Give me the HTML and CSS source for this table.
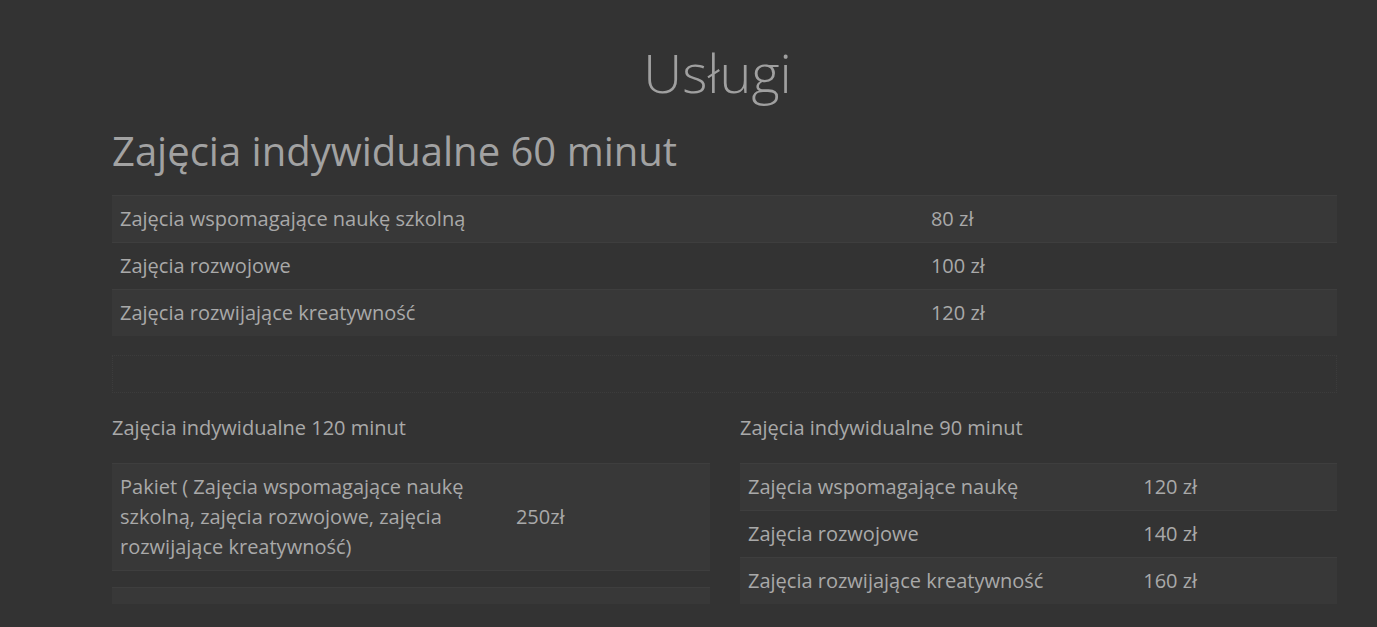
FILE: index.html
```html
<!DOCTYPE html>
<html lang="pl">
<head>
<meta charset="utf-8">
<title>Usługi</title>
<link rel="stylesheet" href="styles.css">
</head>
<body>
<main class="page">
  <h1 class="title">Usługi</h1>
  <h2 class="section-title">Zajęcia indywidualne 60 minut</h2>
  <table class="price-table wide">
    <tr><td class="name">Zajęcia wspomagające naukę szkolną</td><td>80 zł</td></tr>
    <tr><td class="name">Zajęcia rozwojowe</td><td>100 zł</td></tr>
    <tr><td class="name">Zajęcia rozwijające kreatywność</td><td>120 zł</td></tr>
  </table>
  <div class="empty-box"></div>
  <div class="columns">
    <section class="col">
      <h3 class="col-title">Zajęcia indywidualne 120 minut</h3>
      <table class="price-table">
        <tr><td class="name">Pakiet ( Zajęcia wspomagające naukę szkolną, zajęcia rozwojowe, zajęcia rozwijające kreatywność)</td><td>250zł</td></tr>
        <tr class="empty"><td></td><td></td></tr>
        <tr class="empty"><td></td><td></td></tr>
      </table>
    </section>
    <section class="col">
      <h3 class="col-title">Zajęcia indywidualne 90 minut</h3>
      <table class="price-table">
        <tr><td class="name">Zajęcia wspomagające naukę</td><td>120 zł</td></tr>
        <tr><td class="name">Zajęcia rozwojowe</td><td>140 zł</td></tr>
        <tr><td class="name">Zajęcia rozwijające kreatywność</td><td>160 zł</td></tr>
      </table>
    </section>
  </div>
</main>
</body>
</html>
```
FILE: styles.css
```css
html, body {
  margin: 0;
  padding: 0;
  background: #333333;
}
body {
  font-family: "Open Sans", "Noto Sans", sans-serif;
  color: #a9a9a9;
}
.page {
  width: 1225px;
  margin-left: 112px;
  padding-top: 36px;
}
.title {
  margin: 0;
  text-align: center;
  font-weight: 300;
  font-size: 54px;
  line-height: 72px;
  color: #a0a0a0;
  padding-right: 14px;
}
.section-title {
  margin: 16px 0 0;
  font-weight: 400;
  font-size: 40px;
  line-height: 54px;
  color: #a2a2a2;
}
.price-table {
  width: 100%;
  border-collapse: collapse;
  font-size: 20px;
  line-height: 30px;
}
.price-table.wide {
  margin-top: 17px;
}
.price-table td {
  padding: 8px;
  border-top: 1px solid #3e3e3e;
  vertical-align: middle;
}
.price-table td.name {
  width: 66.2%;
}
.price-table tr:nth-child(odd) td {
  background: #383838;
}
.price-table tr.empty td {
  padding: 8px;
  height: 0;
  line-height: 0;
}
.empty-box {
  margin-top: 19px;
  height: 36px;
  border: 1px dotted #3c3c3c;
}
.columns {
  display: grid;
  grid-template-columns: 598px 597px;
  column-gap: 30px;
  margin-top: 20px;
}
.col-title {
  margin: 0 0 20px;
  font-weight: 400;
  font-size: 20px;
  line-height: 30px;
}
```
